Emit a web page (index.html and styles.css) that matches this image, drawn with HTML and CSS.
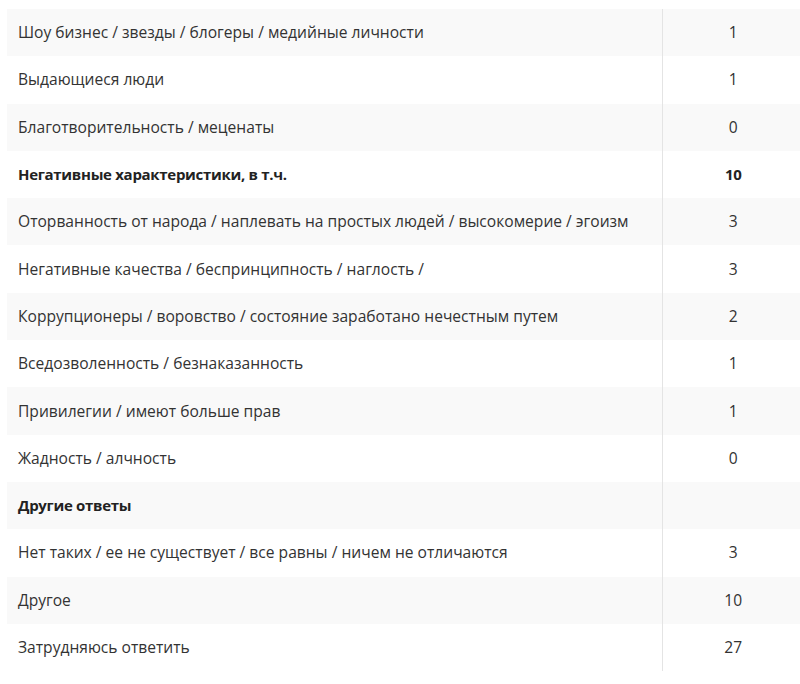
FILE: index.html
```html
<!DOCTYPE html>
<html lang="ru">
<head>
<meta charset="utf-8">
<link rel="stylesheet" href="styles.css">
</head>
<body>
<div class="wrap">
<table class="data">
<tbody>
<tr><td class="label">Шоу бизнес / звезды / блогеры / медийные личности</td><td class="num">1</td></tr>
<tr><td class="label">Выдающиеся люди</td><td class="num">1</td></tr>
<tr><td class="label">Благотворительность / меценаты</td><td class="num">0</td></tr>
<tr class="head"><td class="label">Негативные характеристики, в т.ч.</td><td class="num">10</td></tr>
<tr><td class="label">Оторванность от народа / наплевать на простых людей / высокомерие / эгоизм</td><td class="num">3</td></tr>
<tr><td class="label">Негативные качества / беспринципность / наглость /</td><td class="num">3</td></tr>
<tr><td class="label">Коррупционеры / воровство / состояние заработано нечестным путем</td><td class="num">2</td></tr>
<tr><td class="label">Вседозволенность / безнаказанность</td><td class="num">1</td></tr>
<tr><td class="label">Привилегии / имеют больше прав</td><td class="num">1</td></tr>
<tr><td class="label">Жадность / алчность</td><td class="num">0</td></tr>
<tr class="head"><td class="label">Другие ответы</td><td class="num"></td></tr>
<tr><td class="label">Нет таких / ее не существует / все равны / ничем не отличаются</td><td class="num">3</td></tr>
<tr><td class="label">Другое</td><td class="num">10</td></tr>
<tr><td class="label">Затрудняюсь ответить</td><td class="num">27</td></tr>
</tbody>
</table>
</div>
</body>
</html>
```
FILE: styles.css
```css
html, body {
  margin: 0;
  padding: 0;
  background: #ffffff;
  overflow: hidden;
}
.wrap {
  padding: 9px 0 0 7px;
  width: 810px;
}
.data {
  border-collapse: collapse;
  width: 797px;
  font-family: "Open Sans", "Liberation Sans", sans-serif;
  font-size: 15.6px;
  color: #333333;
}
.data tr:nth-child(odd) {
  background: #f9f9f9;
}
.data td {
  height: 47.3px;
  padding: 0 0 1px 11px;
  box-sizing: border-box;
  vertical-align: middle;
  line-height: 20px;
}
.data td.label {
  width: 655px;
  border-right: 1px solid #e4e4e4;
}
.data td.num {
  text-align: center;
  padding: 0 0 1px 0;
}
.data tr.head td {
  font-weight: 700;
  font-size: 15px;
  letter-spacing: -0.3px;
  color: #222222;
}
```
